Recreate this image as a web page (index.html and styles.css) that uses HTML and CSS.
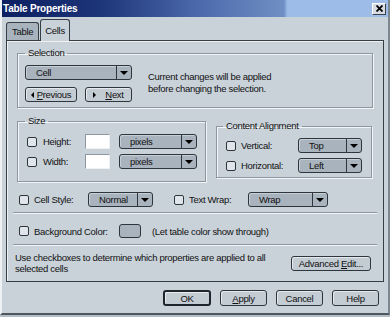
FILE: index.html
```html
<!DOCTYPE html>
<html>
<head>
  <link rel="stylesheet" href="styles.css">
</head>
<body>
  <div class="window">
    <div class="titlebar">
      <span class="title">Table Properties</span>
      <span class="close">
        <svg width="7" height="7" viewBox="0 0 7 7"><path d="M0.5 0.5 L6.5 6.5 M6.5 0.5 L0.5 6.5" stroke="#000" stroke-width="1.8"/></svg>
      </span>
    </div>

    <div class="tabs">
      <div class="tab">Table</div>
      <div class="tab active">Cells</div>
    </div>

    <div class="panel">
      <fieldset class="group selection">
        <legend>Selection</legend>
        <div class="sel-row">
          <div class="sel-controls">
            <div class="dropdown" id="cellSelect"><span class="value">Cell</span><span class="arrow"></span></div>
            <div class="nav">
              <button class="btn" id="prevBtn"><span class="tri left"></span><span><u>P</u>revious</span></button>
              <button class="btn" id="nextBtn"><span class="tri right"></span><span><u>N</u>ext</span></button>
            </div>
          </div>
          <p class="note">Current changes will be applied<br>before changing the selection.</p>
        </div>
      </fieldset>

      <div class="groups">
        <fieldset class="group size">
          <legend>Size</legend>
          <div class="field">
            <label class="check"><span class="box"></span>Height:</label>
            <input type="text" class="textbox">
            <div class="dropdown units"><span class="value">pixels</span><span class="arrow"></span></div>
          </div>
          <div class="field">
            <label class="check"><span class="box"></span>Width:</label>
            <input type="text" class="textbox">
            <div class="dropdown units"><span class="value">pixels</span><span class="arrow"></span></div>
          </div>
        </fieldset>

        <fieldset class="group align">
          <legend>Content Alignment</legend>
          <div class="field">
            <label class="check"><span class="box"></span>Vertical:</label>
            <div class="dropdown small"><span class="value">Top</span><span class="arrow"></span></div>
          </div>
          <div class="field">
            <label class="check"><span class="box"></span>Horizontal:</label>
            <div class="dropdown small"><span class="value">Left</span><span class="arrow"></span></div>
          </div>
        </fieldset>
      </div>

      <div class="row style-row">
        <label class="check cellstyle"><span class="box"></span>Cell Style:</label>
        <div class="dropdown normal"><span class="value">Normal</span><span class="arrow"></span></div>
        <label class="check textwrap"><span class="box"></span>Text Wrap:</label>
        <div class="dropdown wrap"><span class="value">Wrap</span><span class="arrow"></span></div>
      </div>

      <div class="sep"></div>

      <div class="row bg-row">
        <label class="check bgcolor"><span class="box"></span>Background Color:</label>
        <span class="swatch"></span>
        <span class="hint">(Let table color show through)</span>
      </div>

      <div class="sep"></div>

      <div class="row help-row">
        <p class="help-text">Use checkboxes to determine which properties are applied to all<br>selected cells</p>
        <button class="btn advanced"><span>Advanced <u>E</u>dit...</span></button>
      </div>
    </div>

    <div class="buttons">
      <button class="btn default">OK</button>
      <button class="btn"><span><u>A</u>pply</span></button>
      <button class="btn">Cancel</button>
      <button class="btn">Help</button>
    </div>
  </div>
</body>
</html>
```

FILE: styles.css
```css
* {
  box-sizing: border-box;
}
body {
  margin: 0;
  background: #b4bcc4;
  font-family: "Liberation Sans", Arial, sans-serif;
  font-size: 9.5px;
  letter-spacing: -0.3px;
  color: #111;
}
.window {
  width: 390px;
  height: 315px;
  background: #c9d1d9;
  border-left: 2px solid #eef1f4;
  border-right: 2px solid #7d8791;
  border-bottom: 2px solid #4e565e;
}
.titlebar {
  height: 17px;
  display: flex;
  align-items: center;
  justify-content: space-between;
  padding: 0 2px 0 1px;
  background: linear-gradient(to right, #0c2062 0%, #1c3478 25%, #4a68aa 50%, #6f8fc4 73%, #9dbde8 74%, #9dbde8 100%);
}
.title {
  color: #fff;
  font-weight: bold;
  font-size: 10px;
  letter-spacing: -0.2px;
}
.close {
  width: 14px;
  height: 12px;
  display: flex;
  align-items: center;
  justify-content: center;
  background: #d6dce2;
  border: 1px solid;
  border-color: #fff #3c444c #3c444c #fff;
}

.tabs {
  display: flex;
  align-items: flex-end;
  height: 23px;
  margin-left: 4px;
  padding-top: 2px;
}
.tab {
  height: 18px;
  padding: 3px 5px 0 5px;
  background: #a9b3bd;
  border: 1px solid #353d45;
  border-bottom: none;
  border-radius: 3px 3px 0 0;
}
.tab.active {
  height: 22px;
  padding: 5px 4px 0 4px;
  margin-bottom: -1px;
  margin-left: 1px;
  background: #c9d1d9;
  position: relative;
  z-index: 1;
}

.panel {
  width: 378px;
  height: 242px;
  margin-left: 4px;
  border: 1px solid #353d45;
  box-shadow: inset 1px 1px 0 #eef1f4;
}

.group {
  margin: 0;
  padding: 0;
  border: 1px solid #8d97a1;
  box-shadow: inset 1px 1px 0 #f2f5f7, 1px 1px 0 #f2f5f7;
  min-width: 0;
}
.group legend {
  padding: 0 3px;
  line-height: 12px;
}

.selection {
  margin: 6px 10px 0 10px;
  padding: 6px 7px 5px 7px;
}
.selection legend {
  margin-left: 0;
}
.sel-row {
  display: flex;
}
.sel-controls {
  width: 107px;
}
.nav {
  display: flex;
  gap: 8px;
  margin-top: 7px;
}
#prevBtn {
  width: 52px;
}
#nextBtn {
  width: 47px;
}
.note {
  margin: 6px 0 0 16px;
  line-height: 12px;
}

.dropdown {
  display: flex;
  height: 15px;
  background: #a9b3bd;
  border: 1px solid #2e353c;
  border-radius: 3px;
  box-shadow: inset 1px 1px 0 #c6ced6;
}
.dropdown .value {
  flex: 1;
  padding-left: 10px;
  line-height: 13px;
}
.dropdown .arrow {
  width: 15px;
  border-left: 1px solid #2e353c;
  display: flex;
  align-items: center;
  justify-content: center;
}
.dropdown .arrow::after {
  content: "";
  border-left: 4px solid transparent;
  border-right: 4px solid transparent;
  border-top: 4px solid #000;
}

.btn {
  height: 15px;
  padding: 0;
  font: inherit;
  letter-spacing: inherit;
  color: #111;
  background: #c3cbd3;
  border: 1px solid #2e353c;
  border-radius: 3px;
  box-shadow: inset 1px 1px 0 #e6eaee;
  display: flex;
  align-items: center;
  justify-content: center;
}
.btn u {
  text-decoration: underline;
}
.tri {
  width: 0;
  height: 0;
  border-top: 3px solid transparent;
  border-bottom: 3px solid transparent;
  margin-right: 3px;
}
.tri.left {
  border-right: 3px solid #000;
}
.tri.right {
  border-left: 3px solid #000;
  margin-right: 9px;
}

.groups {
  display: flex;
  align-items: flex-start;
  margin: 7px 0 0 10px;
}
.size {
  width: 189px;
  padding: 7px 8px 12px 9px;
}
.size legend {
  margin-left: -2px;
}
.align {
  width: 156px;
  margin-left: 10px;
  margin-top: 5px;
  padding: 6px 9px 4px 9px;
}
.align legend {
  margin-left: -3px;
}
.field {
  display: flex;
  align-items: center;
  height: 15px;
}
.field + .field {
  margin-top: 5px;
}

.check {
  display: flex;
  align-items: center;
  gap: 5px;
}
.box {
  width: 10px;
  height: 10px;
  background: #dfe5eb;
  border: 1px solid #2e353c;
  border-radius: 2px;
}
.size .check {
  width: 58px;
  gap: 6px;
}
.align .check {
  width: 72px;
}
.textbox {
  width: 25px;
  height: 15px;
  padding: 0;
  background: #fff;
  border: 1px solid;
  border-color: #8d97a1 #eef1f4 #eef1f4 #8d97a1;
}
.units {
  width: 78px;
  margin-left: 9px;
}
.small {
  width: 64px;
}

.row {
  display: flex;
  align-items: center;
  margin-left: 12px;
}
.style-row {
  margin-top: 10px;
  height: 15px;
}
.cellstyle {
  width: 69px;
}
.normal {
  width: 65px;
}
.textwrap {
  width: 74px;
  margin-left: 21px;
}
.wrap {
  width: 80px;
}

.sep {
  height: 2px;
  margin: 5px 6px 0 6px;
  border-top: 1px solid #8d97a1;
  border-bottom: 1px solid #f2f5f7;
}

.bg-row {
  margin-top: 10px;
  height: 14px;
}
.bgcolor {
  width: 100px;
}
.swatch {
  width: 22px;
  height: 14px;
  background: #a9b3bd;
  border: 1px solid #2e353c;
  border-radius: 3px;
}
.hint {
  margin-left: 11px;
}
.bg-row + .sep {
  margin-top: 6px;
}

.help-row {
  margin: 6px 0 0 8px;
  align-items: flex-start;
}
.help-text {
  margin: 0;
  line-height: 11px;
  width: 276px;
}
.advanced {
  width: 80px;
  margin-top: 4px;
}

.buttons {
  display: flex;
  justify-content: flex-end;
  gap: 9px;
  margin: 8px 9px 0 0;
}
.buttons .btn {
  width: 47px;
  height: 16px;
}
.buttons .default {
  width: 48px;
  border: 2px solid #1e252c;
}
```
